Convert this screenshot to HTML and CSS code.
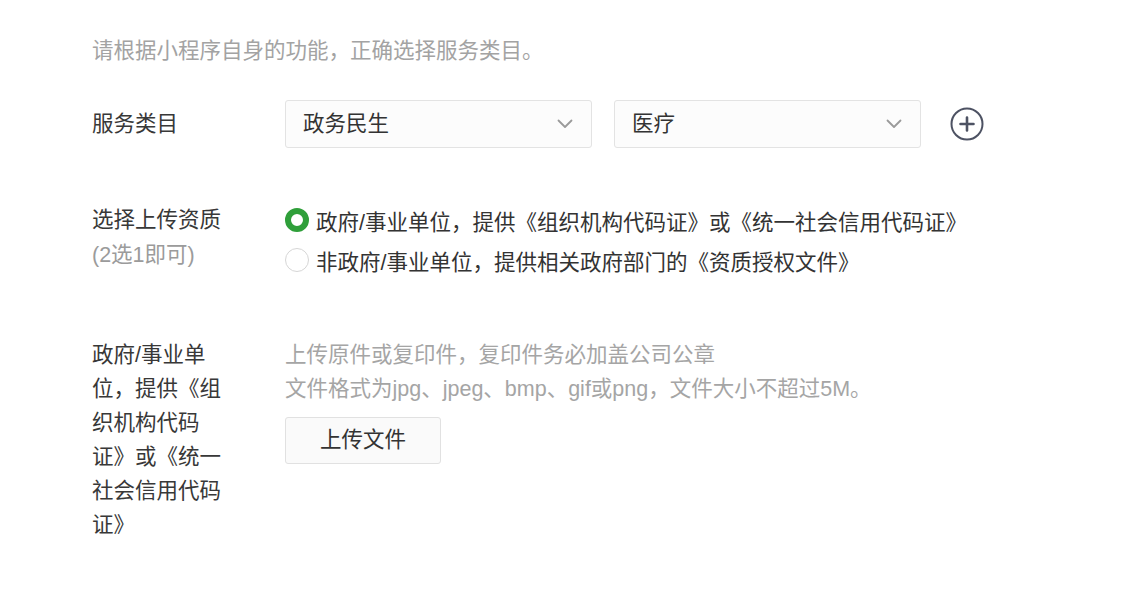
FILE: index.html
```html
<!DOCTYPE html>
<html lang="zh-CN">
<head>
<meta charset="utf-8">
<title>服务类目</title>
<link rel="stylesheet" href="styles.css">
</head>
<body>
<div class="page">
  <p class="intro">请根据小程序自身的功能，正确选择服务类目。</p>

  <div class="row row-category">
    <div class="label">服务类目</div>
    <div class="content selects">
      <div class="select">
        <span>政务民生</span>
        <svg class="chev" width="16" height="10" viewBox="0 0 16 10"><path d="M1.5 1.5 L8 8 L14.5 1.5" fill="none" stroke="#9a9a9a" stroke-width="1.8" stroke-linecap="round" stroke-linejoin="round"/></svg>
      </div>
      <div class="select">
        <span>医疗</span>
        <svg class="chev" width="16" height="10" viewBox="0 0 16 10"><path d="M1.5 1.5 L8 8 L14.5 1.5" fill="none" stroke="#9a9a9a" stroke-width="1.8" stroke-linecap="round" stroke-linejoin="round"/></svg>
      </div>
      <svg class="add" width="34" height="34" viewBox="0 0 34 34"><circle cx="17" cy="17" r="15.5" fill="none" stroke="#4d5263" stroke-width="2"/><path d="M17 10.5 V23.5 M10.5 17 H23.5" stroke="#4d5263" stroke-width="2.6" stroke-linecap="round"/></svg>
    </div>
  </div>

  <div class="row row-qual">
    <div class="label label-qual">选择上传资质<br><span class="sub">(2选1即可)</span></div>
    <div class="content radios">
      <div class="radio-line"><span class="radio checked"></span><span>政府/事业单位，提供《组织机构代码证》或《统一社会信用代码证》</span></div>
      <div class="radio-line"><span class="radio"></span><span>非政府/事业单位，提供相关政府部门的《资质授权文件》</span></div>
    </div>
  </div>

  <div class="row row-upload">
    <div class="label label-long">政府/事业单位，提供《组织机构代码证》或《统一社会信用代码证》</div>
    <div class="content upload">
      <p class="hint">上传原件或复印件，复印件务必加盖公司公章</p>
      <p class="hint">文件格式为jpg、jpeg、bmp、gif或png，文件大小不超过5M。</p>
      <button class="btn" type="button">上传文件</button>
    </div>
  </div>
</div>
</body>
</html>
```
FILE: styles.css
```css
html, body {
  margin: 0;
  padding: 0;
  background: #ffffff;
}
body {
  font-family: "Liberation Sans", "Noto Sans CJK SC", sans-serif;
  font-size: 21.5px;
  color: #353535;
}
.page {
  padding: 34px 0 0 92px;
}
.intro {
  margin: 0;
  line-height: 34px;
  color: #a3a3a3;
}
.row {
  display: grid;
  grid-template-columns: 132px 1fr;
  column-gap: 61px;
}
.row-category {
  margin-top: 32px;
  align-items: center;
}
.label {
  line-height: 34px;
  color: #383838;
}
.selects {
  display: flex;
  align-items: center;
  gap: 22px;
}
.select {
  box-sizing: border-box;
  width: 307px;
  height: 48px;
  border: 1px solid #e3e3e3;
  border-radius: 3px;
  background: #fcfcfc;
  display: flex;
  align-items: center;
  justify-content: space-between;
  padding: 0 18px 0 17px;
  color: #333;
}
.select span {
  line-height: 30px;
}
.add {
  margin-left: 7px;
}
.row-qual {
  margin-top: 52px;
}
.label-qual {
  line-height: 35px;
  padding-top: 3px;
}
.sub {
  color: #9b9b9b;
}
.radio-line {
  height: 40px;
  display: flex;
  align-items: center;
  gap: 7px;
  color: #333;
}
.radio {
  box-sizing: border-box;
  width: 24px;
  height: 24px;
  border-radius: 50%;
  border: 1px solid #d6d6d6;
  background: #fff;
  flex: none;
}
.radio.checked {
  border: 6.5px solid #2f9f3a;
}
.row-upload {
  margin-top: 58px;
}
.hint {
  margin: 0;
  line-height: 34px;
  color: #a5a5a5;
}
.btn {
  margin-top: 11px;
  box-sizing: border-box;
  width: 156px;
  height: 47px;
  border: 1px solid #e1e1e1;
  border-radius: 3px;
  background: #fafafa;
  font-family: inherit;
  font-size: 21.5px;
  line-height: 44px;
  color: #333;
  padding: 0 0 2px;
}
```
